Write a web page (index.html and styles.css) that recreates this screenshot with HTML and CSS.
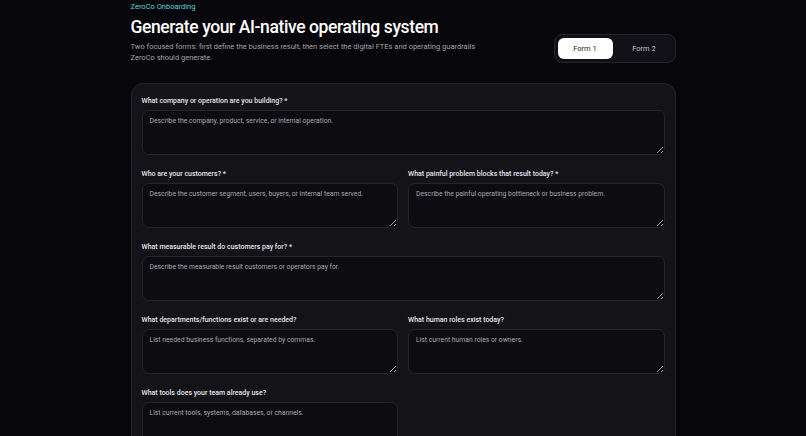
FILE: index.html
```html
<!DOCTYPE html>
<html lang="en">
<head>
  <meta charset="UTF-8">
  <meta name="viewport" content="width=device-width, initial-scale=1.0">
  <title>ZeroCo Onboarding</title>
  <link rel="stylesheet" href="styles.css">
</head>
<body>
  <main class="page">
    <!-- Header -->
    <header class="page-head">
      <div class="intro">
        <p class="eyebrow">ZeroCo Onboarding</p>
        <h1>Generate your AI-native operating system</h1>
        <p class="lead">Two focused forms: first define the business result, then select the digital FTEs and operating guardrails ZeroCo should generate.</p>
      </div>
      <div class="tabs">
        <button class="tab active" type="button">Form 1</button>
        <button class="tab" type="button">Form 2</button>
      </div>
    </header>

    <!-- Form 1 -->
    <form class="card">
      <div class="field">
        <label for="company">What company or operation are you building? *</label>
        <textarea id="company" placeholder="Describe the company, product, service, or internal operation."></textarea>
      </div>

      <div class="row">
        <div class="field">
          <label for="customers">Who are your customers? *</label>
          <textarea id="customers" placeholder="Describe the customer segment, users, buyers, or internal team served."></textarea>
        </div>
        <div class="field">
          <label for="problem">What painful problem blocks that result today? *</label>
          <textarea id="problem" placeholder="Describe the painful operating bottleneck or business problem."></textarea>
        </div>
      </div>

      <div class="field">
        <label for="result">What measurable result do customers pay for? *</label>
        <textarea id="result" placeholder="Describe the measurable result customers or operators pay for."></textarea>
      </div>

      <div class="row">
        <div class="field">
          <label for="departments">What departments/functions exist or are needed?</label>
          <textarea id="departments" placeholder="List needed business functions, separated by commas."></textarea>
        </div>
        <div class="field">
          <label for="roles">What human roles exist today?</label>
          <textarea id="roles" placeholder="List current human roles or owners."></textarea>
        </div>
      </div>

      <div class="row">
        <div class="field">
          <label for="tools">What tools does your team already use?</label>
          <textarea id="tools" placeholder="List current tools, systems, databases, or channels."></textarea>
        </div>
      </div>
    </form>
  </main>
</body>
</html>
```

FILE: styles.css
```css
body {
  margin: 0;
  background-color: #07060b;
  color: #f0f0f2;
  font-family: Roboto, "Open Sans", Arial, sans-serif;
}

.page {
  width: 545px;
  margin: 0 auto;
}

.page-head {
  display: flex;
  justify-content: space-between;
  align-items: flex-end;
  padding-top: 1px;
}

.eyebrow {
  margin: 0;
  font-size: 7.5px;
  line-height: 11px;
  color: #5fd0dc;
}

h1 {
  margin: 4px 0 3px;
  font-size: 17.5px;
  line-height: 22px;
  font-weight: 500;
  letter-spacing: -0.4px;
  color: #ffffff;
}

.lead {
  margin: 0;
  max-width: 350px;
  font-size: 7.5px;
  line-height: 11px;
  color: #a3a2aa;
}

.tabs {
  display: flex;
  padding: 3px;
  background-color: #111016;
  border: 1px solid #25242b;
  border-radius: 8px;
}

.tab {
  width: 55px;
  height: 21px;
  padding: 0;
  border: none;
  border-radius: 6px;
  background: transparent;
  color: #c4c3ca;
  font-family: inherit;
  font-size: 7.5px;
}

.tab + .tab {
  margin-left: 4px;
}

.tab.active {
  background-color: #ffffff;
  color: #1a1a1f;
}

.card {
  display: flex;
  flex-direction: column;
  gap: 14px;
  margin-top: 20px;
  padding: 12px 10px 20px;
  background-color: #141318;
  border: 1px solid #24232a;
  border-radius: 12px;
}

.row {
  display: grid;
  grid-template-columns: 1fr 1fr;
  gap: 10px;
}

.field {
  display: flex;
  flex-direction: column;
  gap: 4px;
}

label {
  font-size: 7px;
  line-height: 10px;
  font-weight: 500;
  color: #e4e3e8;
}

textarea {
  box-sizing: border-box;
  height: 45px;
  margin: 0;
  padding: 5px 7px;
  background-color: #0d0c11;
  border: 1px solid #25242b;
  border-radius: 7px;
  color: #f0f0f2;
  font-family: inherit;
  font-size: 6.8px;
  line-height: 10px;
}

textarea::placeholder {
  color: #a9a8b0;
}
```
